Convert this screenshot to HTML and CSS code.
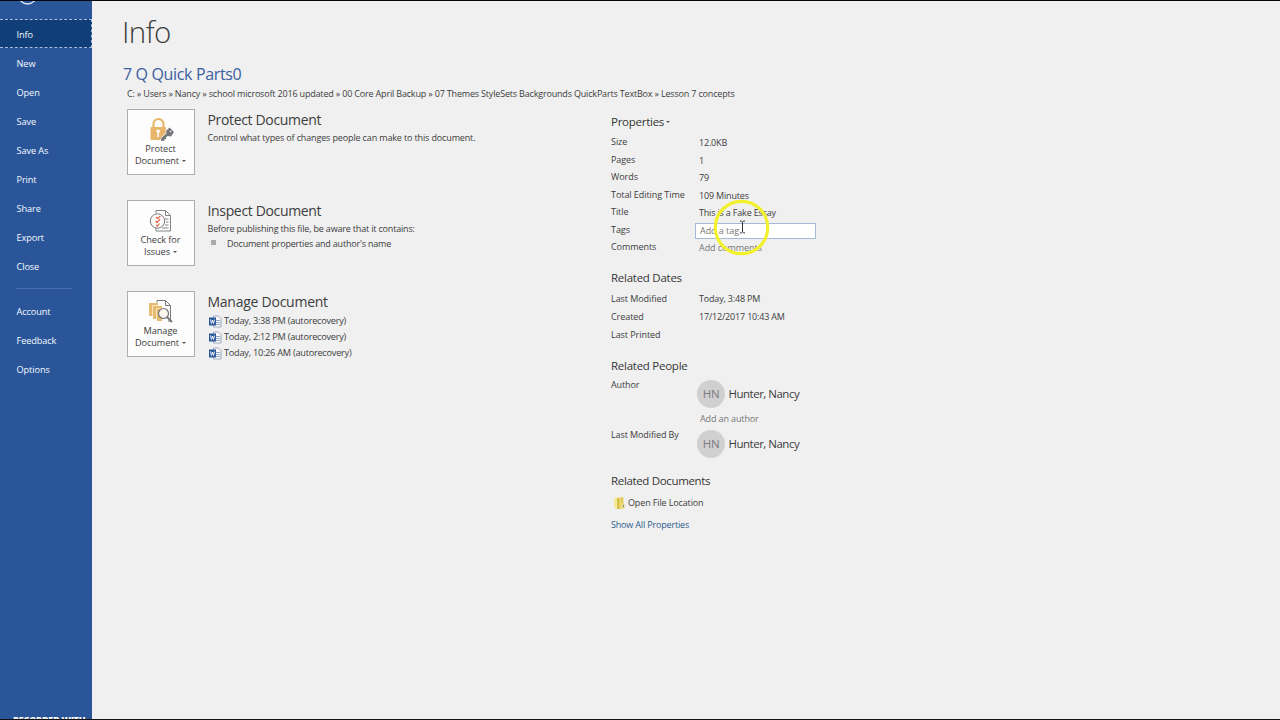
FILE: index.html
```html
<!DOCTYPE html>
<html lang="en">
<head>
<meta charset="utf-8">
<title>Info</title>
<link rel="stylesheet" href="styles.css">
</head>
<body>
<div class="app">
  <nav class="sidebar">
    <div class="back"><svg width="24" height="24" viewBox="0 0 24 24"><circle cx="11.500" cy="12" r="9" fill="none" stroke="#dfe8f5" stroke-width="1.4"/></svg></div>
    <a class="item active">Info</a>
    <a class="item">New</a>
    <a class="item">Open</a>
    <a class="item">Save</a>
    <a class="item">Save As</a>
    <a class="item">Print</a>
    <a class="item">Share</a>
    <a class="item">Export</a>
    <a class="item">Close</a>
    <div class="divider"></div>
    <a class="item lower">Account</a>
    <a class="item lower">Feedback</a>
    <a class="item lower">Options</a>
    <div class="watermark">RECORDED WITH</div>
  </nav>
  <main class="main">
    <h1 class="title">Info</h1>
    <h2 class="doc">7 Q Quick Parts0</h2>
    <div class="path">C: » Users » Nancy » school microsoft 2016 updated » 00 Core April Backup » 07 Themes StyleSets Backgrounds QuickParts TextBox » Lesson 7 concepts</div>
    <div class="columns">
      <div class="left">
        <section class="action">
          <button class="card">
            <svg class="card-icon" width="26" height="26" viewBox="0 0 26 26"><path d="M5.500 11V7a5 5 0 0 1 10 0v4" fill="none" stroke="#e8b66b" stroke-width="2.200"/><rect x="2.500" y="10" width="15.500" height="13" rx="1" fill="#e8b66b"/><circle cx="10.200" cy="14.300" r="1.800" fill="#fff"/><path d="M9.500 15H11v5H9.500z" fill="#fff"/><path d="M18 14l3.500-3.500 4.500 4.500-3 4.500-3.500-.5-1.500 1.500.2 1.500-1.700.2-.2 1.600-3.300.2.300-3 5.200-4.500z" stroke="#fdfdfd" stroke-width="1.200" fill="#77777b" paint-order="stroke"/><circle cx="22.500" cy="14.500" r=".8" fill="#fff"/></svg>
            <span>Protect</span><span>Document<i class="caret"></i></span>
          </button>
          <div class="info"><h3>Protect Document</h3><p class="p-protect">Control what types of changes people can make to this document.</p></div>
        </section>
        <section class="action">
          <button class="card">
            <svg class="card-icon" width="26" height="26" viewBox="0 0 26 26" fill="none"><path d="M8 5V2.500h9.500l5 5V23H8v-4M17.500 2.500v5h5M17 11h3.500M18 14h2.500M17 17h3.500M14 20h6.500" stroke="#77777a" stroke-width=".9"/><circle cx="9.500" cy="13" r="7.200" fill="#fdfdfd" stroke="#77777a"/><path d="M8 9l1.500 1.500L12.500 8M7.500 13L9 14.500l3-3.500M8 17l1.500 1.200L11.500 15.500" stroke="#e0694a" stroke-width="1.200"/></svg>
            <span>Check for</span><span>Issues<i class="caret"></i></span>
          </button>
          <div class="info"><h3>Inspect Document</h3><p class="p-inspect">Before publishing this file, be aware that it contains:</p><p class="bullet">Document properties and author's name</p></div>
        </section>
        <section class="action">
          <button class="card">
            <svg class="card-icon" width="26" height="26" viewBox="0 0 26 26" fill="none"><path d="M9 3.500V1.500h8.500l5 5V22H20M17.500 1.500v5h5" stroke="#77777a"/><path d="M1 4h9v3H5v10H1zM5 7h9v3H9v10H5zM9 10h5v12H9z" fill="#e8bc70"/><path d="M4.500 17V6.500h7M8.500 20V9.500h6" stroke="#fff3dc" stroke-width=".7"/><circle cx="15.500" cy="14.500" r="5" fill="#fbf6ee" stroke="#737377" stroke-width="1.200"/><path d="M19 18l5 5" stroke="#737377" stroke-width="1.800"/></svg>
            <span>Manage</span><span>Document<i class="caret"></i></span>
          </button>
          <div class="info"><h3 class="h-manage">Manage Document</h3>
            <div class="version"><svg width="13" height="13" viewBox="0 0 13 13"><path d="M4.500 1h5L12 3.500V12H4.500z" fill="#f8fafc" stroke="#8c98aa" stroke-width=".8"/><path d="M7 5.500h4M7 7.500h4M7 9.500h4" stroke="#7895bf" stroke-width=".8"/><path d="M0 2.500h7v8H0z" fill="#2d599c"/><path d="M1.500 4.500l1 4 1-3.500 1 3.500 1-4" stroke="#fff" stroke-width=".9" fill="none"/></svg>Today, 3:38 PM (autorecovery)</div>
            <div class="version"><svg width="13" height="13" viewBox="0 0 13 13"><path d="M4.500 1h5L12 3.500V12H4.500z" fill="#f8fafc" stroke="#8c98aa" stroke-width=".8"/><path d="M7 5.500h4M7 7.500h4M7 9.500h4" stroke="#7895bf" stroke-width=".8"/><path d="M0 2.500h7v8H0z" fill="#2d599c"/><path d="M1.500 4.500l1 4 1-3.500 1 3.500 1-4" stroke="#fff" stroke-width=".9" fill="none"/></svg>Today, 2:12 PM (autorecovery)</div>
            <div class="version"><svg width="13" height="13" viewBox="0 0 13 13"><path d="M4.500 1h5L12 3.500V12H4.500z" fill="#f8fafc" stroke="#8c98aa" stroke-width=".8"/><path d="M7 5.500h4M7 7.500h4M7 9.500h4" stroke="#7895bf" stroke-width=".8"/><path d="M0 2.500h7v8H0z" fill="#2d599c"/><path d="M1.500 4.500l1 4 1-3.500 1 3.500 1-4" stroke="#fff" stroke-width=".9" fill="none"/></svg>Today, 10:26 AM (autorecovery)</div>
          </div>
        </section>
      </div>
      <aside class="right">
        <h4 class="props">Properties<i class="caret"></i></h4>
        <dl class="grid">
          <dt>Size</dt><dd>12.0KB</dd>
          <dt>Pages</dt><dd>1</dd>
          <dt>Words</dt><dd>79</dd>
          <dt>Total Editing Time</dt><dd>109 Minutes</dd>
          <dt>Title</dt><dd>This is a Fake Essay</dd>
          <dt>Tags</dt><dd class="field">Add a tag</dd>
          <dt>Comments</dt><dd class="hint">Add comments</dd>
        </dl>
        <h4 class="dates">Related Dates</h4>
        <dl class="grid dategrid">
          <dt>Last Modified</dt><dd>Today, 3:48 PM</dd>
          <dt>Created</dt><dd>17/12/2017 10:43 AM</dd>
          <dt>Last Printed</dt><dd></dd>
        </dl>
        <h4 class="people">Related People</h4>
        <div class="person-row"><span class="label">Author</span><span class="avatar">HN</span><span class="name">Hunter, Nancy</span></div>
        <div class="add-author">Add an author</div>
        <div class="person-row"><span class="label">Last Modified By</span><span class="avatar">HN</span><span class="name">Hunter, Nancy</span></div>
        <h4 class="docs">Related Documents</h4>
        <div class="location"><svg width="12" height="14" viewBox="0 0 12 14"><path d="M0 2l4-1.500V13L0 12z" fill="#f5e99b"/><path d="M3 2h4.500v11H3z" fill="#e3c955"/><path d="M6 1h3.500v6l1 1v4.500l-5 .5V8z" fill="#edd978"/><path d="M4 2v11M8 2v5" stroke="#c9a93d" stroke-width=".7"/><path d="M9.500 9v2" stroke="#658cab"/></svg><span>Open File Location</span></div>
        <a class="show">Show All Properties</a>
      </aside>
    </div>
  </main>
  <svg class="pointer" width="60" height="60" viewBox="0 0 60 60" fill="none"><circle cx="29.500" cy="30.500" r="26.200" stroke="#f3f02c" stroke-width="3.200"/><path d="M28 24q2 0 2.500 1 .5-1 2.500-1M30.500 25v10M28 36q2 0 2.500-1 .5 1 2.500 1" stroke="#333" stroke-width="1"/></svg>
</div>
</body>
</html>
```
FILE: styles.css
```css
* { box-sizing: border-box; margin: 0; padding: 0; }
body { width: 1280px; height: 720px; overflow: hidden; background: #f0f0f0; color: #3d3d3d; font: 9px/16px "Open Sans", "Noto Sans", sans-serif; }
.app { position: relative; display: flex; width: 1280px; height: 720px; overflow: hidden; border-top: 1px solid #050510; border-bottom: 1px solid #111; }
.sidebar { width: 92px; height: 718px; flex: none; display: flex; flex-direction: column; background: #2a5699; color: #f4f8ff; overflow: hidden; }
.back { height: 18px; padding-left: 16px; flex: none; display: flex; align-items: flex-end; }
.back svg { margin-bottom: 12px; flex: none; }
.item { height: 29px; flex: none; padding-left: 16.500px; line-height: 31px; font-size: 9.2px; font-weight: 500; letter-spacing: -.1px; }
.item.lower { line-height: 29px; }
.item.active { background: #103e78; border: 1px dashed #a9bfdc; border-left: 0; line-height: 29px; }
.divider { height: 1px; flex: none; width: 56px; margin: 8px 0 8px 16px; background: #4770ad; }
.watermark { margin-top: auto; height: 4px; flex: none; overflow: hidden; padding-left: 13px; color: #fff; font-weight: 800; font-size: 9px; line-height: 9px; letter-spacing: -.23px; white-space: nowrap; }
.main { flex: 1; padding-left: 31px; white-space: nowrap; }
.title { height: 62px; line-height: 61px; font-size: 29.500px; font-weight: 300; letter-spacing: -.6px; margin-left: -1px; }
.doc { height: 22px; line-height: 22px; font-size: 16px; font-weight: 400; color: #3a60a0; letter-spacing: -.35px; }
.path { height: 24px; line-height: 18px; padding-left: 4px; letter-spacing: -.178px; }
.columns { display: flex; padding-left: 4px; }
.left { width: 484px; display: flex; flex-direction: column; gap: 25px; }
.action { display: flex; gap: 12.500px; height: 66px; }
.card { width: 68px; height: 66px; flex: none; display: flex; flex-direction: column; align-items: center; padding: 7px 1px 0 0; border: 1px solid #adadad; background: #fdfdfd; color: #3d3d3d; font: 9.2px/12px "Open Sans", sans-serif; letter-spacing: -.08px; }
.card-icon { flex: none; }
.caret { display: inline-block; width: 0; height: 0; border: 2px solid transparent; border-top-color: #555; border-bottom: 0; vertical-align: middle; margin-left: 3px; position: relative; top: -1px; }
.info h3 { height: 21px; line-height: 22px; font-size: 14px; font-weight: 400; letter-spacing: -.34px; }
.info .h-manage { letter-spacing: -.25px; }
.info p { height: 15px; line-height: 15px; }
.p-protect { letter-spacing: -.14px; }
.p-inspect { letter-spacing: -.18px; }
.bullet { display: flex; align-items: center; letter-spacing: -.2px; }
.bullet::before { content: ""; width: 5px; height: 5px; margin: 0 11.500px 2px 3px; background: #aaa; }
.version { display: flex; align-items: center; height: 16px; line-height: 16px; gap: 2.500px; padding-left: 1px; font-size: 9.2px; letter-spacing: -.25px; position: relative; top: 1px; }
.right { width: 220px; }
h4 { font-size: 11.500px; font-weight: 400; color: #363636; line-height: 20px; height: 20px; letter-spacing: -.26px; }
.props { margin-top: 3px; margin-bottom: 2px; }
.props .caret { margin-left: 2px; }
.grid { display: grid; grid-template-columns: 88px 120px; grid-auto-rows: 17.500px; line-height: 17px; letter-spacing: -.06px; }
.grid dt { line-height: 16px; }
.grid dd { white-space: nowrap; letter-spacing: -.18px; }
.grid .field { height: 16px; line-height: 14px; margin: 1px 0 0 -4px; width: 121px; border: 1px solid #a5b8d5; background: #fff; padding-left: 4px; color: #777; letter-spacing: -.05px; }
.hint, .add-author { color: #777; }
.grid .hint { letter-spacing: -.05px; }
.dates { margin-top: 11px; }
.dategrid { grid-auto-rows: 18px; }
.dategrid dt, .dategrid dd { line-height: 21px; }
.people { margin-top: 14px; }
.person-row { display: flex; align-items: center; height: 35px; }
.person-row .label { width: 86px; align-self: flex-start; line-height: 18px; letter-spacing: -.1px; }
.avatar { width: 28px; height: 28px; border-radius: 50%; background: #d0d0d0; color: #7b7b7f; text-align: center; line-height: 27px; font-size: 11.500px; letter-spacing: -.3px; margin-top: 1px; }
.name { margin: 1px 0 0 3.500px; font-size: 11.500px; letter-spacing: -.5px; }
.add-author { padding-left: 89px; height: 15px; line-height: 15px; letter-spacing: -.12px; }
.docs { margin-top: 10px; letter-spacing: -.34px; }
.location { display: flex; align-items: center; height: 24px; padding-left: 3px; gap: 2px; letter-spacing: -.13px; }
.show { display: block; color: #2d5b8d; height: 20px; line-height: 20px; letter-spacing: -.17px; }
.pointer { position: absolute; left: 712px; top: 196px; }
```
